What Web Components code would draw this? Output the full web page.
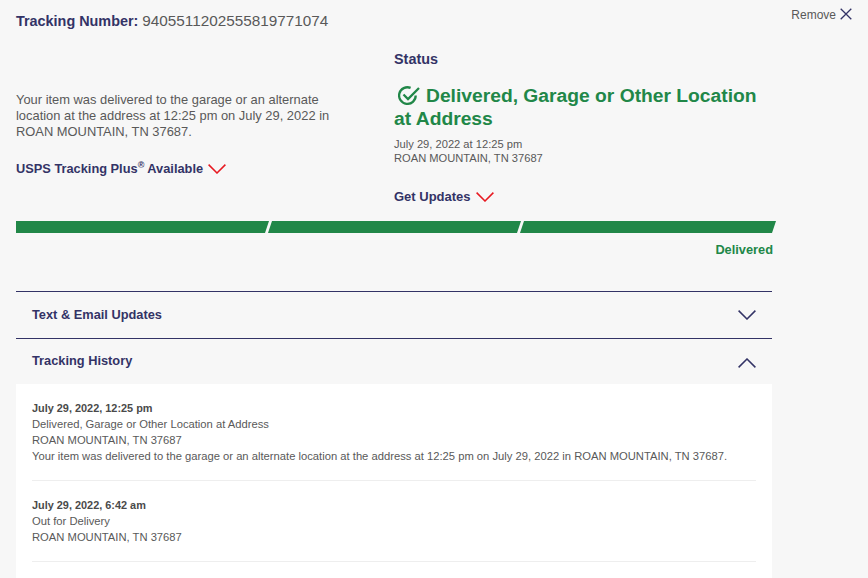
<!DOCTYPE html>
<html lang="en"><head><meta charset="utf-8"><title>Tracking</title>
<style>
html,body{margin:0;height:578px;overflow:hidden;background:#f7f7f7;font-family:"Liberation Sans",Arial,sans-serif;color:#595959}
</style></head><body>
<tracking-page>
  <tracking-head number="9405511202555819771074"></tracking-head>
  <tracking-summary></tracking-summary>
  <progress-bar label="Delivered"></progress-bar>
  <accordion-row label="Text &amp; Email Updates" dir="down"></accordion-row>
  <accordion-row label="Tracking History" dir="up"></accordion-row>
  <history-list>
    <history-item when="July 29, 2022, 12:25 pm">
      <div>Delivered, Garage or Other Location at Address</div>
      <div>ROAN MOUNTAIN, TN 37687</div>
      <div>Your item was delivered to the garage or an alternate location at the address at 12:25 pm on July 29, 2022 in ROAN MOUNTAIN, TN 37687.</div>
    </history-item>
    <history-item when="July 29, 2022, 6:42 am">
      <div>Out for Delivery</div>
      <div>ROAN MOUNTAIN, TN 37687</div>
    </history-item>
  </history-list>
</tracking-page>
<script>
const chev='<svg width="18" height="10" viewBox="0 0 18 10" fill="none" stroke="currentColor" stroke-width="1.5"><path d="M.6.6 9 9 17.4.6"/></svg>';
function def(name,css,html){
  customElements.define(name,class extends HTMLElement{
    connectedCallback(){
      if(this.shadowRoot)return;
      const s=this.attachShadow({mode:'open'});
      s.innerHTML='<style>'+css+'</style>'+(typeof html==='function'?html(this):html);
    }
  });
}
def('tracking-page',':host{display:block;width:760px;padding:0 0 0 16px}','<slot></slot>');
def('tracking-head',`:host{display:flex;align-items:flex-start;height:43px;padding-top:12px;box-sizing:border-box;width:836px;justify-content:space-between;font-size:14px}
 b{color:#333366;font-size:14.4px}
 .n{font-size:15.3px;color:#595959}
 .r{display:flex;align-items:center;gap:4px;color:#595959;font-size:12px;margin-top:-4px;line-height:14px}
 .r svg{color:#333366;position:relative;top:-1px}`,
 h=>`<div><b>Tracking Number:</b> <span class="n">${h.getAttribute('number')}</span></div>
 <div class="r">Remove <svg width="12" height="12" viewBox="0 0 12 12" fill="none" stroke="currentColor" stroke-width="1.3"><path d="M.7.7l10.6 10.6M11.3.7.7 11.3"/></svg></div>`);
def('tracking-summary',`:host{display:grid;grid-template-columns:378px 382px;height:178px;font-size:12.9px}
 .l{padding-top:49px;line-height:16px;width:340px}
 .more,.up{font-weight:700;color:#333366;display:flex;align-items:center;gap:5px;font-size:12.8px}
 .more{margin-top:21px}
 sup{font-size:9px;line-height:0;vertical-align:5px}
 .more svg,.up svg{color:#e71921}
 .s{padding-top:8px}
 .t{font-weight:700;font-size:14.4px;color:#333366;line-height:16px}
 h2{margin:17px 0 0;color:#218748;font-size:19.25px;line-height:23px;font-weight:700}
 h2 svg{vertical-align:-3px;margin:0 6px 0 4px}
 .d{margin-top:7px;font-size:11.15px;line-height:14px}
 .up{margin-top:24px;font-size:13px}`,
 `<div class="l">Your item was delivered to the garage or an alternate location at the address at 12:25 pm on July 29, 2022 in ROAN MOUNTAIN, TN 37687.
  <div class="more"><span>USPS Tracking Plus<sup>®</sup> Available</span>${chev}</div></div>
 <div class="s"><div class="t">Status</div>
 <h2><svg width="22" height="19" viewBox="0 0 22 19" fill="none" stroke="currentColor" stroke-width="2.3"><path d="M17.7 9.5A8.3 8.3 0 1 1 12.6 1.9"/><path d="M5.5 8.5l4.5 4.5L21 2"/></svg>Delivered, Garage or Other Location at Address</h2>
 <div class="d">July 29, 2022 at 12:25 pm<br>ROAN MOUNTAIN, TN 37687</div>
 <div class="up"><span>Get Updates</span>${chev}</div></div>`);
def('progress-bar',`:host{display:block;width:760px}
 .b{display:flex;height:12px}
 i{display:block;height:12px;background:#218748;flex:0 0 253px;margin-left:-1px;clip-path:polygon(4px 0,100% 0,calc(100% - 4px) 100%,0 100%)}
 i:first-child{margin-left:0;clip-path:polygon(0 0,100% 0,calc(100% - 4px) 100%,0 100%)}
 i:last-child{flex:1}
 .l{text-align:right;padding:9px 3px 0 0;font-weight:700;font-size:12.8px;line-height:16px;color:#218748;height:49px}`,
 h=>`<div class="b"><i></i><i></i><i></i></div><div class="l">${h.getAttribute('label')}</div>`);
def('accordion-row',`:host{display:flex;width:756px;height:47px;box-sizing:border-box;border-top:1px solid #333366;align-items:center;justify-content:space-between;padding:0 16px;color:#333366;font-weight:700;font-size:12.8px}
 .t{position:relative;top:-1px}
 :host([dir=up]) .t{top:-2px}
 .down{display:flex}
 .up{display:flex;transform:rotate(180deg);position:relative;top:1px}`,
 h=>`<span class="t">${h.getAttribute('label')}</span><span class="${h.getAttribute('dir')}">${chev}</span>`);
def('history-list',`:host{display:block;width:756px;height:194px;background:#fff;padding:16px 16px 0;box-sizing:border-box;margin-top:-1px}`,'<slot></slot>');
def('history-item',`:host{display:block;font-size:11.23px;line-height:16px;color:#595959;padding-bottom:16px;margin-bottom:16px;border-bottom:1px solid #eee}
 b{display:block;color:#4a4a4a;font-size:10.9px}`,
 h=>`<b>${h.getAttribute('when')}</b><slot></slot>`);
</script>
</body></html>
